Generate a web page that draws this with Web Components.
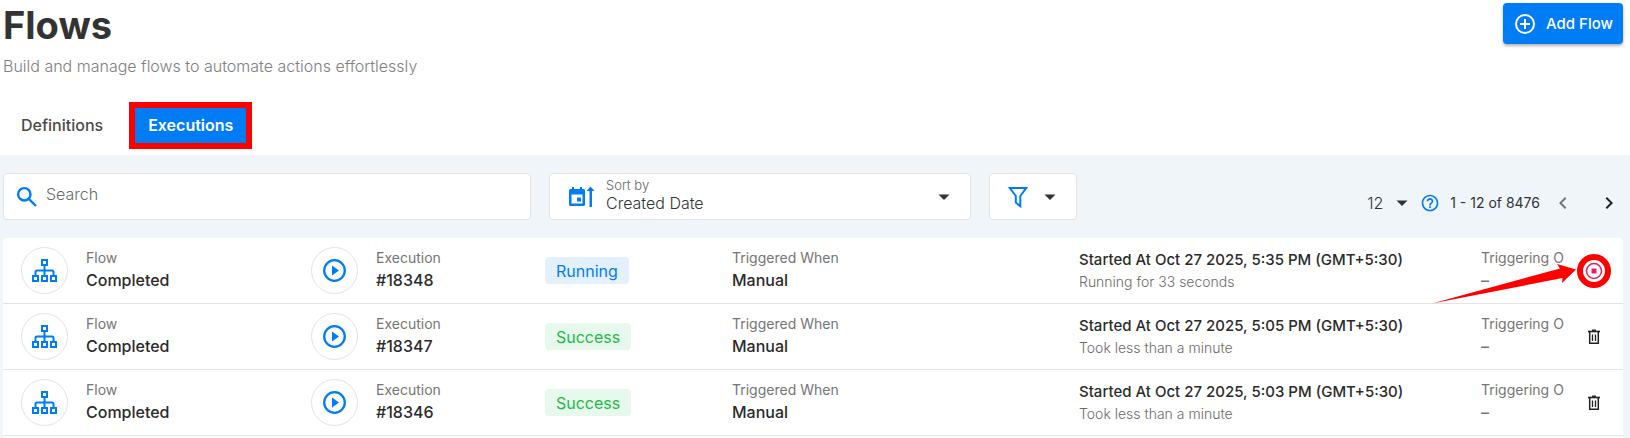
<!DOCTYPE html>
<html lang="en">
<head>
<meta charset="utf-8">
<title>Flows</title>
<style>
  html { background: #fff; }
  body {
    margin: 0;
    font: 400 16px/24px Inter, "Liberation Sans", sans-serif;
    color: #333;
    --blue: #007cf5;
    --mark: #ff0000;
    --line: #e3e3e3;
    --muted: #757575;
    --panel: #f0f5fa;
  }
</style>
</head>
<body>
<flows-page></flows-page>

<template id="t-page">
  <style>
    :host { display: flex; flex-direction: column; min-height: 100vh; }
    .panel { flex: 1; display: flex; flex-direction: column; background: var(--panel); padding: 0 7px 0 3px; }
    .list { flex: 1; background: #fff; border-radius: 4px 4px 0 0; }
  </style>
  <page-header>
    <span slot="title">Flows</span>
    <span slot="subtitle">Build and manage flows to automate actions effortlessly</span>
  </page-header>
  <page-tabs></page-tabs>
  <main class="panel">
    <list-toolbar></list-toolbar>
    <div class="list" role="list">
      <execution-row number="#18348" status="Running" running>
        <span slot="started">Started At Oct 27 2025, 5:35 PM (GMT+5:30)</span>
        <span slot="duration">Running for 33 seconds</span>
      </execution-row>
      <execution-row number="#18347" status="Success">
        <span slot="started">Started At Oct 27 2025, 5:05 PM (GMT+5:30)</span>
        <span slot="duration">Took less than a minute</span>
      </execution-row>
      <execution-row number="#18346" status="Success">
        <span slot="started">Started At Oct 27 2025, 5:03 PM (GMT+5:30)</span>
        <span slot="duration">Took less than a minute</span>
      </execution-row>
    </div>
  </main>
</template>

<template id="t-header">
  <style>
    :host { display: flex; justify-content: space-between; align-items: flex-start; padding: 3px 7px 0 3px; }
    h1 { margin: 0; font-size: 38px; line-height: 44px; font-weight: 700; color: #333; }
    p { margin: 7px 0 0; font-weight: 300; color: #808080; }
    button {
      display: flex; align-items: center; justify-content: center; gap: 9px;
      min-width: 120px; height: 41px; padding: 0 8px; border: 0; border-radius: 4px;
      background: var(--blue); color: #fff; font: 500 15px/24px Inter, sans-serif;
      box-shadow: 0 2px 3px rgba(0,0,0,.3);
    }
  </style>
  <div>
    <h1><slot name="title"></slot></h1>
    <p><slot name="subtitle"></slot></p>
  </div>
  <button type="button">
    <svg width="24" height="24" viewBox="0 0 24 24" fill="none" stroke="#fff" stroke-width="2" aria-hidden="true"><circle cx="12" cy="12" r="9"/><path d="M12 7v10M7 12h10"/></svg>
    Add Flow
  </button>
</template>

<template id="t-tabs">
  <style>
    :host { display: block; padding: 24px 3px 6px; }
    nav { display: flex; gap: 8px; }
    a { display: flex; align-items: center; height: 47px; padding: 0 18px 2px; box-sizing: border-box; font-weight: 500; color: #4a4a4a; text-decoration: none; }
    a.on { padding: 0 13px 2px; border: 6px solid var(--mark); background: var(--blue); color: #fff; font-weight: 600; }
  </style>
  <nav aria-label="Flow views">
    <a href="#definitions">Definitions</a>
    <a href="#executions" class="on" aria-current="page">Executions</a>
  </nav>
</template>

<template id="t-toolbar">
  <style>
    :host {
      display: grid; grid-template-columns: 528fr 422fr 88px 528fr; gap: 18px; padding: 18px 0;
    }
    .box { display: flex; align-items: center; height: 47px; box-sizing: border-box; background: #fff; border: 1px solid var(--line); border-radius: 4px; }
    svg { flex: none; display: block; }
    input, select, button { font: inherit; color: inherit; border: 0; background: none; padding: 0; margin: 0; outline: 0; appearance: none; border-radius: 0; }
    .search { padding: 0 12px; gap: 8px; }
    .search input { flex: 1; min-width: 0; height: 24px; margin-bottom: 6px; }
    .search input::placeholder { color: #6b6b6b; font-weight: 300; opacity: 1; }
    .sort { padding: 0 14px 0 19px; gap: 11px; }
    .pair { display: grid; flex: 1; align-items: center; }
    .pair > * { grid-area: 1 / 1; }
    .pair svg { justify-self: end; pointer-events: none; }
    .labels { display: flex; flex-direction: column; padding-bottom: 3px; }
    .labels label { font-size: 13px; line-height: 16px; font-weight: 300; color: #666; }
    .labels select { width: 100%; height: 20px; line-height: 20px; font-weight: 300; }
    button.filter { justify-content: flex-end; gap: 10px; padding-right: 14px; background: #fff; border: 1px solid var(--line); border-radius: 4px; }
    .pager { display: flex; align-items: center; justify-content: flex-end; padding: 12px 2px 0 0; font-size: 14px; line-height: 20px; }
    .size { width: 47px; flex: none; margin-right: 6px; }
    .size select { width: 100%; font-size: 16px; font-weight: 300; height: 20px; line-height: 20px; }
    .help { margin-right: 10px; }
    .prev { margin-left: 11px; margin-right: 22px; }
    .prev svg { fill: #757575; }
  </style>
  <div class="box search">
    <svg width="22" height="22" viewBox="0 0 22 22" fill="none" stroke="var(--blue)" stroke-width="2.4" aria-hidden="true"><circle cx="8.3" cy="8.3" r="6.2"/><path d="M12.8 12.8l7.2 7.2"/></svg>
    <input type="search" placeholder="Search" aria-label="Search">
  </div>
  <div class="box sort">
    <svg width="26" height="22" viewBox="0 0 26 22" aria-hidden="true">
      <g fill="var(--blue)"><path fill-rule="evenodd" d="M3 1h2v2h6V1h2v2h1.500q1.500 0 1.500 1.500v14q0 1.500-1.500 1.500h-13Q0 20 0 18.500v-14Q0 3 1.500 3H3zM2.500 8.500v9h11v-9z"/><path d="M8 11.500h4v4H8zM20.500 21V5h-3l4-4.500 4 4.500h-2.500v16z"/></g>
    </svg>
    <div class="pair">
      <div class="labels">
        <label for="sort">Sort by</label>
        <select id="sort"><option>Created Date</option></select>
      </div>
      <svg width="24" height="24" viewBox="0 0 24 24" fill="#333" aria-hidden="true"><path d="M6.500 9.500h11L12 15z"/></svg>
    </div>
  </div>
  <button type="button" class="box filter" aria-label="Filter">
    <svg width="20" height="22" viewBox="0 0 20 22" fill="none" stroke="var(--blue)" stroke-width="2" aria-hidden="true"><path d="M1.800 2h16.400L12.300 10v10.200L7.800 16.500V10z"/></svg>
    <svg width="24" height="24" viewBox="0 0 24 24" fill="#333" aria-hidden="true"><path d="M6.500 9.500h11L12 15z"/></svg>
  </button>
  <div class="pager">
    <div class="pair size">
      <select aria-label="Rows per page"><option>12</option></select>
      <svg width="24" height="24" viewBox="0 0 24 24" fill="#333" aria-hidden="true"><path d="M6.500 9.500h11L12 15z"/></svg>
    </div>
    <button type="button" class="help" aria-label="Help">
      <svg width="20" height="20" viewBox="0 0 24 24" fill="var(--blue)" aria-hidden="true"><path d="M11 18h2v-2h-2v2zm1-16C6.480 2 2 6.480 2 12s4.480 10 10 10 10-4.480 10-10S17.520 2 12 2zm0 18c-4.410 0-8-3.590-8-8s3.590-8 8-8 8 3.590 8 8-3.590 8-8 8zm0-14c-2.210 0-4 1.790-4 4h2c0-1.100.9-2 2-2s2 .9 2 2c0 2-3 1.750-3 5h2c0-2.250 3-2.500 3-5 0-2.210-1.790-4-4-4z"/></svg>
    </button>
    <span>1 - 12 of 8476</span>
    <button type="button" class="prev" aria-label="Previous page"><svg width="24" height="24" viewBox="0 0 24 24"><path d="M15.410 7.410L14 6l-6 6 6 6 1.410-1.410L10.830 12z"/></svg></button>
    <button type="button" aria-label="Next page"><svg width="24" height="24" viewBox="0 0 24 24" fill="#222"><path d="M10 6L8.590 7.410 13.170 12l-4.580 4.590L10 18l6-6z"/></svg></button>
  </div>
</template>

<template id="t-field">
  <style>
    :host { display: block; min-width: 0; padding-bottom: 2px; white-space: nowrap; }
    .label { font-size: 14px; line-height: 20px; color: var(--muted); overflow: hidden; }
    .value { font-weight: 500; color: #2b2b2b; }
    :host([quiet]) .value { color: var(--muted); }
  </style>
  <div class="label"><slot name="label"></slot></div>
  <div class="value"><slot></slot></div>
</template>

<template id="t-row">
  <style>
    :host {
      position: relative; display: grid; align-items: center; height: 65px; padding-left: 18px;
      grid-template-columns: minmax(0,290fr) minmax(0,234fr) minmax(0,187fr) minmax(0,347fr) minmax(0,402fr) minmax(0,84fr) 58px;
      border-bottom: 1px solid var(--line);
    }
    svg { display: block; }
    .media { display: flex; align-items: center; gap: 18px; }
    .disc { flex: none; display: grid; place-items: center; width: 47px; height: 47px; box-sizing: border-box; border: 1px solid var(--line); border-radius: 50%; }
    .badge { justify-self: start; padding: 2px 11px 1px; border-radius: 4px; background: #e7f8ec; color: #22b84a; }
    :host([running]) .badge { background: #e3f0fe; color: var(--blue); }
    .times { padding-bottom: 2px; white-space: nowrap; }
    .started { font-size: 15px; font-weight: 500; color: #2b2b2b; }
    .duration { font-size: 14px; line-height: 20px; font-weight: 300; color: #6b6b6b; }
    button { justify-self: center; display: grid; place-items: center; width: 34px; height: 34px; padding: 0; background: none; border: 0; border-radius: 50%; }
    :host([running]) button { border: 6px solid var(--mark); }
    .stop, .arrow { display: none; }
    :host([running]) .stop { display: block; }
    :host([running]) .bin { display: none; }
    :host([running]) .arrow { display: block; position: absolute; right: 47px; top: 25px; }
  </style>
  <div class="media">
    <span class="disc"><svg width="25" height="23" viewBox="0 0 25 23" fill="none" stroke="var(--blue)" stroke-width="2" aria-hidden="true"><path d="M10 1h5v5h-5zM1 17h5v5H1zM10 17h5v5h-5zM19 17h5v5h-5zM12.500 6v11M3.500 17v-4q0-1.500 1.500-1.500h15q1.500 0 1.500 1.500v4"/></svg></span>
    <item-field><span slot="label">Flow</span>Completed</item-field>
  </div>
  <div class="media">
    <span class="disc"><svg width="23" height="23" viewBox="0 0 23 23" aria-hidden="true"><circle cx="11.500" cy="11.500" r="10.300" fill="none" stroke="var(--blue)" stroke-width="2.300"/><path d="M9 6.500v10l7-5z" fill="var(--blue)"/></svg></span>
    <item-field><span slot="label">Execution</span><span id="number"></span></item-field>
  </div>
  <span class="badge" id="status"></span>
  <item-field><span slot="label">Triggered When</span>Manual</item-field>
  <div class="times">
    <div class="started"><slot name="started"></slot></div>
    <div class="duration"><slot name="duration"></slot></div>
  </div>
  <item-field quiet><span slot="label">Triggering O</span>–</item-field>
  <button type="button" id="action">
    <svg class="stop" width="18" height="18" viewBox="0 0 18 18" aria-hidden="true"><circle cx="9" cy="9" r="7.500" fill="none" stroke="#e0245e" stroke-width="1.500"/><path d="M6.500 6.500h5v5h-5z" fill="#e91e63"/></svg>
    <svg class="bin" width="14" height="16" viewBox="0 0 14 16" fill="none" stroke="#222" aria-hidden="true"><path d="M1 2.500h12" stroke-width="1.600"/><path d="M5 1.200h4" stroke-width="1.400"/><path d="M2.700 3v11.300h8.600V3" stroke-width="1.500"/><path d="M5.500 5.500v6.500M8.500 5.500v6.500" stroke-width="1.300"/></svg>
  </button>
  <svg class="arrow" width="146" height="41" viewBox="0 0 146 41" aria-hidden="true"><path d="M2 40.500L130 5.500 127 1l19 5.500L132 20l.5-5z" fill="var(--mark)"/></svg>
</template>

<script>
  const define = (name, templateId, init) => customElements.define(name, class extends HTMLElement {
    constructor() {
      super();
      this.attachShadow({ mode: 'open' }).append(document.getElementById(templateId).content.cloneNode(true));
    }
    connectedCallback() { if (init) init(this, this.shadowRoot); }
  });
  define('item-field', 't-field');
  define('execution-row', 't-row', (host, root) => {
    host.setAttribute('role', 'listitem');
    root.getElementById('number').textContent = host.getAttribute('number');
    root.getElementById('status').textContent = host.getAttribute('status');
    root.getElementById('action').setAttribute('aria-label', host.hasAttribute('running') ? 'Stop execution' : 'Delete execution');
  });
  define('list-toolbar', 't-toolbar');
  define('page-tabs', 't-tabs');
  define('page-header', 't-header');
  define('flows-page', 't-page');
</script>
</body>
</html>
